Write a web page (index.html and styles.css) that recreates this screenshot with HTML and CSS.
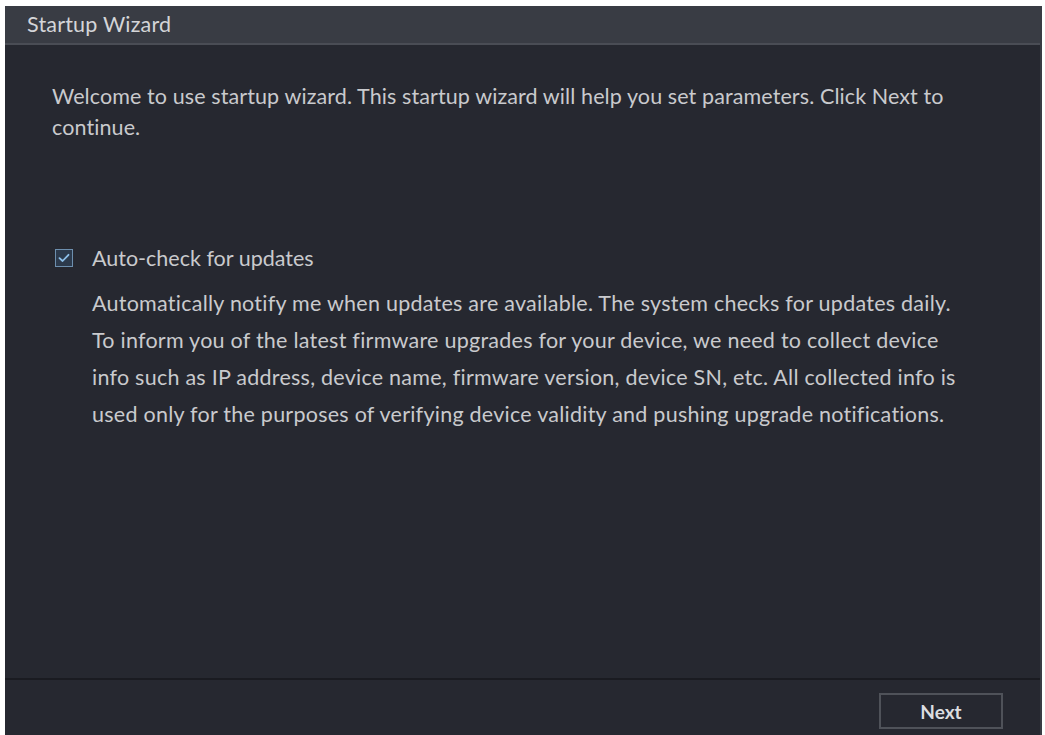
FILE: index.html
```html
<!DOCTYPE html>
<html lang="en">
<head>
<meta charset="utf-8">
<title>Startup Wizard</title>
<link rel="stylesheet" href="styles.css">
</head>
<body>
<div class="dialog">
  <div class="titlebar">Startup Wizard</div>
  <div class="content">
    <p class="welcome">Welcome to use startup wizard. This startup wizard will help you set parameters. Click Next to continue.</p>
    <label class="check-row">
      <span class="checkbox">
        <svg width="12" height="10" viewBox="0 0 12 10"><path d="M1.5 5.2 L4.6 8 L10.5 1.8" fill="none" stroke="#8ec0ea" stroke-width="1.8" stroke-linecap="round" stroke-linejoin="round"/></svg>
      </span>
      <span class="check-label">Auto-check for updates</span>
    </label>
    <p class="note">Automatically notify me when updates are available. The system checks for updates daily.<br>To inform you of the latest firmware upgrades for your device, we need to collect device<br>info such as IP address, device name, firmware version, device SN, etc. All collected info is<br>used only for the purposes of verifying device validity and pushing upgrade notifications.</p>
  </div>
  <div class="footer">
    <button class="btn">Next</button>
  </div>
</div>
</body>
</html>
```

FILE: styles.css
```css
html, body {
  margin: 0;
  padding: 0;
  background: #ffffff;
}
body {
  padding: 6px 3px 0 5px;
  font-family: Lato, "Open Sans", sans-serif;
  color: #c9cacd;
}
.dialog {
  height: 729px;
  background: #262830;
  display: flex;
  flex-direction: column;
  border-right: 2px solid #3a3c44;
}
.titlebar {
  height: 39px;
  background: #393c44;
  border-bottom: 2px solid #4a4d55;
  box-sizing: border-box;
  padding: 0 0 0 22px;
  font-size: 21.5px;
  letter-spacing: 0.2px;
  line-height: 37px;
  color: #d4d5d8;
}
.content {
  flex: 1;
  padding: 36px 60px 0 47px;
  font-size: 21.5px;
}
.welcome {
  margin: 0;
  max-width: 915px;
  line-height: 31px;
  letter-spacing: 0.1px;
}
.check-row {
  display: flex;
  align-items: center;
  gap: 19px;
  margin: 105px 0 0 3px;
}
.checkbox {
  width: 16px;
  height: 16px;
  border: 1px solid #6d8fae;
  background: #2c3a4c;
  display: flex;
  align-items: center;
  justify-content: center;
}
.check-label {
  line-height: 20px;
}
.note {
  margin: 17px 0 0 40px;
  line-height: 37px;
  letter-spacing: 0.25px;
  white-space: nowrap;
}
.footer {
  height: 57px;
  border-top: 2px solid #1a1b21;
  display: flex;
  justify-content: flex-end;
  align-items: flex-start;
  padding: 13px 37px 0 0;
  box-sizing: border-box;
}
.btn {
  width: 124px;
  height: 36px;
  background: #262830;
  border: 2px solid #4f5259;
  color: #dcdde0;
  font-family: Lato, "Open Sans", sans-serif;
  font-size: 19px;
  font-weight: bold;
}
```
